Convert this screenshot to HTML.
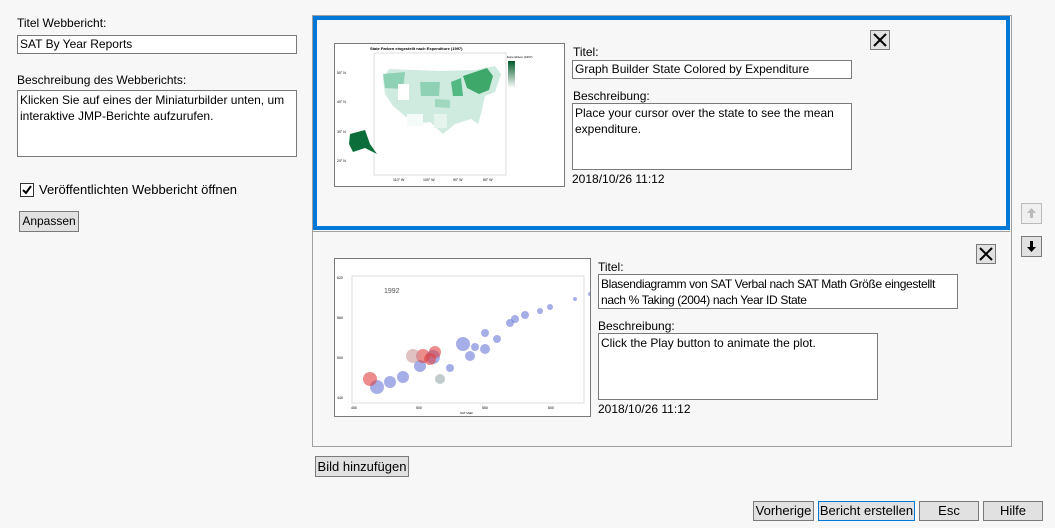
<!DOCTYPE html>
<html><head><meta charset="utf-8"><style>
*{box-sizing:border-box;margin:0;padding:0}
body{width:1055px;height:528px;background:#f7f7f7;font-family:"Liberation Sans",sans-serif;font-size:12px;color:#000;position:relative;overflow:hidden}
.a{position:absolute}
.box{position:absolute;background:#fff;border:1px solid #7a7a7a;padding:1px 2px;line-height:16px;font-size:12px}
.btn{position:absolute;background:#e1e1e1;border:1px solid #7a7a7a;text-align:center;line-height:18px;font-size:12px}
.lbl{position:absolute;font-size:12px;line-height:14px}
.x{position:absolute;width:20px;height:20px;background:#e1e1e1;border:1px solid #7a7a7a}
</style></head><body>
<div class="lbl" style="left:17px;top:16px">Titel Webbericht:</div>
<div class="box" style="left:17px;top:35px;width:280px;height:19px;line-height:14px">SAT By Year Reports</div>
<div class="lbl" style="left:17px;top:73px">Beschreibung des Webberichts:</div>
<div class="box" style="left:17px;top:90px;width:280px;height:67px">Klicken Sie auf eines der Miniaturbilder unten, um interaktive JMP-Berichte aufzurufen.</div>
<div class="a" style="left:20px;top:183px;width:14px;height:14px;border:1px solid #333;background:#fff"><svg width="12" height="12" style="position:absolute;left:0;top:0"><path d="M2 6 L5 9 L10 2" stroke="#000" stroke-width="2" fill="none"/></svg></div>
<div class="lbl" style="left:39px;top:183px;font-size:13px">Veröffentlichten Webbericht öffnen</div>
<div class="btn" style="left:19px;top:211px;width:60px;height:21px;line-height:19px">Anpassen</div>

<div class="a" style="left:312px;top:15px;width:700px;height:432px;border:1px solid #a0a0a0"></div>
<div class="a" style="left:313px;top:16px;width:697px;height:214px;border:4px solid #0078d7"></div>
<div class="a" style="left:313px;top:231px;width:697px;height:1px;background:#a0a0a0"></div>

<!-- item 1 -->
<div class="a" style="left:334px;top:43px;width:231px;height:144px;border:1px solid #7a7a7a;background:#fff">
<svg width="229" height="142" viewBox="0 0 229 142">
<text x="35" y="6" font-size="4" font-weight="bold" font-family="Liberation Sans">State Farben eingestellt nach Expenditure (1997)</text>
<rect x="39" y="9" width="132" height="122" fill="none" stroke="#ddd"/>
<path d="M54 25 L105 27 L140 26 L160 22 L166 30 L160 48 L150 52 L146 70 L143 80 L136 75 L120 80 L108 90 L95 78 L80 80 L70 72 L58 62 L50 50 L48 35 Z" fill="#cfeadf"/>
<path d="M128 32 L140 28 L152 24 L158 32 L154 46 L144 50 L132 44 Z" fill="#3da86a"/>
<path d="M48 30 L70 28 L68 45 L50 44 Z" fill="#8fd1b4"/>
<path d="M85 38 L105 38 L104 52 L86 52 Z" fill="#8fd1b4"/>
<path d="M100 55 L115 56 L115 64 L100 63Z" fill="#9fd8bf"/>
<path d="M116 38 L126 34 L128 52 L118 52 Z" fill="#52b884"/>
<path d="M63 40 L74 40 L74 56 L63 56 Z" fill="#fff"/>
<path d="M72 70 L88 70 L88 82 L72 82 Z" fill="#f4fbf8"/>
<path d="M99 70 L112 70 L112 84 L99 84 Z" fill="#e6f4ee"/>
<path d="M15 90 L30 86 L35 100 L42 110 L30 104 L18 108 L14 100 Z" fill="#0b6e3a"/>
<text x="2" y="30" font-size="3.5">50° N</text><text x="2" y="59" font-size="3.5">40° N</text><text x="2" y="89" font-size="3.5">30° N</text><text x="2" y="118" font-size="3.5">20° N</text>
<text x="58" y="137" font-size="3.5">110° W</text><text x="88" y="137" font-size="3.5">100° W</text><text x="118" y="137" font-size="3.5">90° W</text><text x="148" y="137" font-size="3.5">80° W</text>
<rect x="173" y="17" width="7" height="27" fill="url(#g)"/>
<defs><linearGradient id="g" x1="0" y1="0" x2="0" y2="1"><stop offset="0" stop-color="#005a2a"/><stop offset="1" stop-color="#fff"/></linearGradient></defs>
<text x="172" y="14" font-size="3">Expenditure (1997)</text>
</svg></div>
<div class="lbl" style="left:573px;top:45px">Titel:</div>
<div class="box" style="left:572px;top:60px;width:280px;height:19px;line-height:14px">Graph Builder State Colored by Expenditure</div>
<div class="lbl" style="left:573px;top:89px">Beschreibung:</div>
<div class="box" style="left:572px;top:103px;width:280px;height:67px">Place your cursor over the state to see the mean expenditure.</div>
<div class="lbl" style="left:572px;top:172px">2018/10/26 11:12</div>
<div class="x" style="left:870px;top:30px"><svg width="18" height="18"><path d="M3 3 L15 15 M15 3 L3 15" stroke="#000" stroke-width="2"/></svg></div>

<!-- item 2 -->
<div class="a" style="left:334px;top:258px;width:257px;height:159px;border:1px solid #7a7a7a;background:#fff">
<svg width="255" height="157" viewBox="0 0 255 157">
<rect x="17" y="17" width="232" height="127" fill="none" stroke="#ddd"/>
<text x="49" y="34" font-size="7" fill="#555">1992</text>
<g fill="#6a78d8" fill-opacity=".6">
<circle cx="42" cy="128" r="7"/><circle cx="55" cy="123" r="6"/><circle cx="68" cy="118" r="6"/><circle cx="85" cy="107" r="6"/><circle cx="98" cy="98" r="7"/><circle cx="115" cy="109" r="4"/><circle cx="128" cy="85" r="7"/><circle cx="135" cy="97" r="5"/><circle cx="150" cy="90" r="5"/><circle cx="162" cy="80" r="4"/><circle cx="175" cy="64" r="4"/><circle cx="180" cy="60" r="4"/><circle cx="190" cy="56" r="4"/><circle cx="205" cy="52" r="3"/><circle cx="215" cy="48" r="3"/><circle cx="240" cy="40" r="2"/><circle cx="255" cy="35" r="2"/><circle cx="140" cy="88" r="4"/><circle cx="150" cy="74" r="4"/><circle cx="105" cy="120" r="5" fill="#9aa"/>
</g>
<g fill="#e04040" fill-opacity=".6"><circle cx="35" cy="120" r="7"/><circle cx="88" cy="97" r="7"/><circle cx="95" cy="100" r="6"/><circle cx="78" cy="97" r="7" fill="#c99"/><circle cx="100" cy="93" r="6"/></g>
<text x="2" y="20" font-size="3.5">620</text><text x="2" y="60" font-size="3.5">560</text><text x="2" y="100" font-size="3.5">500</text><text x="2" y="140" font-size="3.5">440</text>
<text x="16" y="150" font-size="3.5">450</text><text x="81" y="150" font-size="3.5">500</text><text x="147" y="150" font-size="3.5">550</text><text x="213" y="150" font-size="3.5">600</text>
<text x="125" y="155" font-size="3">SAT Math</text>
</svg></div>
<div class="lbl" style="left:598px;top:260px">Titel:</div>
<div class="box" style="left:598px;top:274px;width:360px;height:35px;letter-spacing:-0.35px">Blasendiagramm von SAT Verbal nach SAT Math Größe eingestellt nach % Taking (2004) nach Year ID State</div>
<div class="lbl" style="left:598px;top:319px">Beschreibung:</div>
<div class="box" style="left:598px;top:333px;width:280px;height:67px">Click the Play button to animate the plot.</div>
<div class="lbl" style="left:598px;top:402px">2018/10/26 11:12</div>
<div class="x" style="left:976px;top:244px"><svg width="18" height="18"><path d="M3 3 L15 15 M15 3 L3 15" stroke="#000" stroke-width="2"/></svg></div>

<div class="a" style="left:1021px;top:203px;width:21px;height:21px;border:1px solid #bbb;background:#f0f0f0"><svg width="19" height="19"><path d="M9.5 4 L14 9 L11 9 L11 14 L8 14 L8 9 L5 9Z" fill="#bbb"/></svg></div>
<div class="a" style="left:1021px;top:236px;width:21px;height:21px;border:1px solid #7a7a7a;background:#e1e1e1"><svg width="19" height="19"><path d="M9.5 15 L14 10 L11 10 L11 4 L8 4 L8 10 L5 10Z" fill="#000"/></svg></div>

<div class="btn" style="left:315px;top:456px;width:94px;height:21px;line-height:19px;font-size:13px">Bild hinzufügen</div>
<div class="btn" style="left:753px;top:501px;width:61px;height:20px;font-size:13px">Vorherige</div>
<div class="btn" style="left:818px;top:501px;width:97px;height:20px;border-color:#0078d7;font-size:13px">Bericht erstellen</div>
<div class="btn" style="left:919px;top:501px;width:60px;height:20px;font-size:13px">Esc</div>
<div class="btn" style="left:983px;top:501px;width:60px;height:20px;font-size:13px">Hilfe</div>
</body></html>
